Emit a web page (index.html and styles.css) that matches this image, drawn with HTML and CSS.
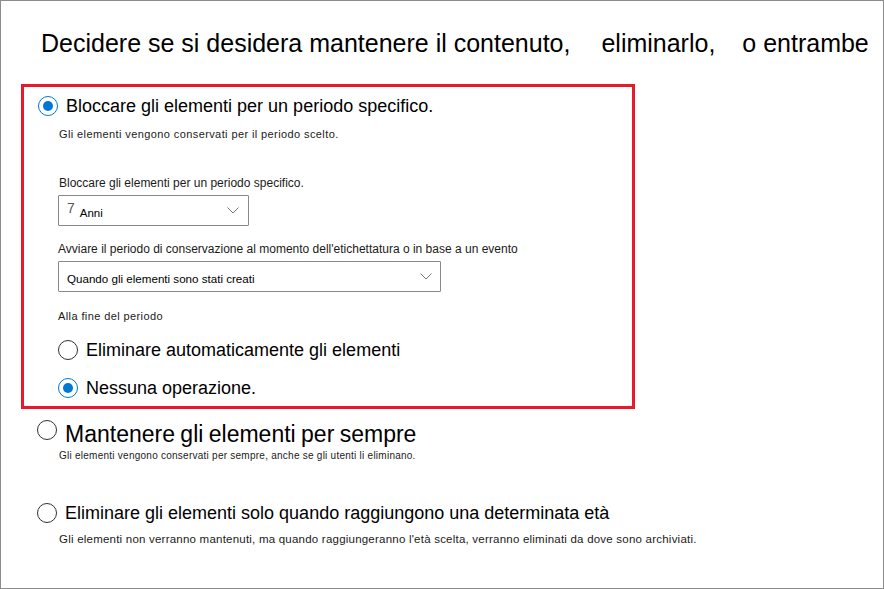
FILE: index.html
```html
<!DOCTYPE html>
<html lang="it">
<head>
<meta charset="utf-8">
<title>Conservazione</title>
<link rel="stylesheet" href="styles.css">
</head>
<body>
<div class="frame">
  <h1 class="title">Decidere se si desidera mantenere il contenuto, <span class="w2">eliminarlo,</span> <span class="w3">o entrambe</span></h1>

  <div class="box">
    <div class="row row-top">
      <span class="radio checked"></span>
      <span class="opt">Bloccare gli elementi per un periodo specifico.</span>
    </div>
    <p class="desc desc1">Gli elementi vengono conservati per il periodo scelto.</p>

    <p class="label label1">Bloccare gli elementi per un periodo specifico.</p>
    <div class="dd dd1">
      <span class="dd-val"><span class="num">7</span><span class="unit">Anni</span></span>
      <svg class="chev" width="12" height="7" viewBox="0 0 12 7"><polyline points="0.5,0.5 6,6 11.5,0.5" fill="none" stroke="#7a7876" stroke-width="1"/></svg>
    </div>

    <p class="label label2">Avviare il periodo di conservazione al momento dell'etichettatura o in base a un evento</p>
    <div class="dd dd2">
      <span class="dd-text">Quando gli elementi sono stati creati</span>
      <svg class="chev" width="12" height="7" viewBox="0 0 12 7"><polyline points="0.5,0.5 6,6 11.5,0.5" fill="none" stroke="#7a7876" stroke-width="1"/></svg>
    </div>

    <p class="small alla">Alla fine del periodo</p>

    <div class="row row-sub row-sub1">
      <span class="radio"></span>
      <span class="opt">Eliminare automaticamente gli elementi</span>
    </div>
    <div class="row row-sub row-sub2">
      <span class="radio checked"></span>
      <span class="opt">Nessuna operazione.</span>
    </div>
  </div>

  <div class="row row-big">
    <span class="radio"></span>
    <span class="opt opt-big">Mantenere gli elementi per sempre</span>
  </div>
  <p class="desc desc2">Gli elementi vengono conservati per sempre, anche se gli utenti li eliminano.</p>

  <div class="row row-out">
    <span class="radio"></span>
    <span class="opt">Eliminare gli elementi solo quando raggiungono una determinata età</span>
  </div>
  <p class="desc desc3">Gli elementi non verranno mantenuti, ma quando raggiungeranno l'età scelta, verranno eliminati da dove sono archiviati.</p>
</div>
</body>
</html>
```

FILE: styles.css
```css
html, body {
  margin: 0;
  padding: 0;
  background: #ffffff;
}

body {
  font-family: "Liberation Sans", Arial, sans-serif;
  color: #000000;
}

.frame {
  width: 884px;
  height: 589px;
  box-sizing: border-box;
  border: 1px solid #8c8c8c;
  overflow: hidden;
  display: flex;
  flex-direction: column;
  align-items: flex-start;
}

.title {
  margin: 28px 0 0 40px;
  font-size: 25px;
  line-height: 29px;
  font-weight: normal;
  white-space: nowrap;
}

.title .w2 { margin-left: 24px; }
.title .w3 { margin-left: 20px; }

.box {
  margin: 26px 0 0 20px;
  width: 614px;
  box-sizing: border-box;
  border: 3px solid #e8192c;
  padding: 8px 0 7px 0;
  display: flex;
  flex-direction: column;
  align-items: flex-start;
}

.row {
  display: flex;
  align-items: flex-start;
  gap: 8px;
}

.opt {
  font-size: 18px;
  line-height: 22px;
  white-space: nowrap;
}

.radio {
  width: 20px;
  height: 20px;
  box-sizing: border-box;
  border: 1px solid #323130;
  border-radius: 50%;
  margin-top: 1px;
  flex: none;
  display: flex;
  align-items: center;
  justify-content: center;
  background: #fff;
}

.radio.checked {
  border-color: #0078d4;
}

.radio.checked::after {
  content: "";
  width: 10px;
  height: 10px;
  border-radius: 50%;
  background: #0078d4;
}

.row-top { margin-left: 14px; }

.desc, .label, .small {
  margin: 0;
  white-space: nowrap;
  color: #1b1a19;
}

.desc1 {
  margin: 10px 0 0 35px;
  font-size: 11px;
  line-height: 14px;
  letter-spacing: 0.4px;
}

.label {
  font-size: 12px;
  line-height: 15px;
}

.label1 { margin: 35px 0 0 35px; }
.label2 { margin: 16px 0 0 34px; }

.dd {
  height: 31px;
  box-sizing: border-box;
  border: 1px solid #8a8886;
  border-radius: 1px;
  display: flex;
  align-items: center;
  justify-content: space-between;
  margin: 4px 0 0 34px;
}

.dd1 {
  width: 191px;
  padding: 0 9px 0 8px;
}

.dd2 {
  width: 383px;
  padding: 0 8px 0 8px;
}

.dd-val {
  line-height: 20px;
  white-space: nowrap;
}

.num {
  font-size: 14px;
  color: #555555;
}

.unit {
  font-size: 11.5px;
  margin-left: 5px;
  vertical-align: -4px;
  color: #000;
}

.dd-text {
  font-size: 11.6px;
  line-height: 16px;
  margin-top: 4px;
  white-space: nowrap;
}

.chev { display: block; flex: none; }

.alla {
  margin: 17px 0 0 34px;
  font-size: 11px;
  line-height: 14px;
  letter-spacing: 0.4px;
}

.row-sub { margin-left: 34px; }
.row-sub1 { margin-top: 16px; }
.row-sub2 { margin-top: 16px; }

.row-big {
  margin: 11px 0 0 36px;
}

.row-big .radio { margin-top: 0; }

.opt-big {
  font-size: 23px;
  line-height: 28px;
  word-spacing: -1px;
}

.desc2 {
  margin: 1px 0 0 58px;
  font-size: 10px;
  line-height: 13px;
  letter-spacing: 0.25px;
}

.row-out {
  margin: 40px 0 0 36px;
}

.desc3 {
  margin: 8px 0 0 58px;
  font-size: 11.5px;
  line-height: 14px;
  letter-spacing: 0.22px;
}
```
